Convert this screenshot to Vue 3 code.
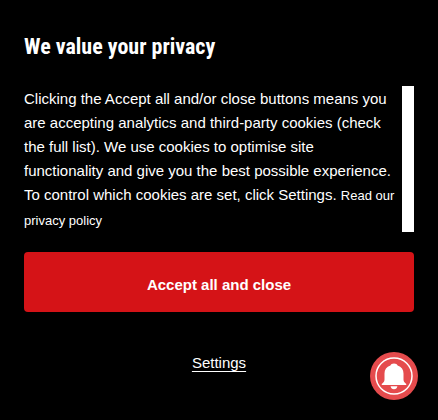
<script setup>
const title = 'We value your privacy'
</script>

<template>
  <main class="consent">
    <h1 class="title">{{ title }}</h1>
    <div class="body">
      <p class="copy">
        Clicking the Accept all and/or close buttons means you<br>
        are accepting analytics and third-party cookies (check<br>
        the full list). We use cookies to optimise site<br>
        functionality and give you the best possible experience.<br>
        To control which cookies are set, click Settings.
        <a class="policy" href="#privacy">Read our<br>privacy policy</a>
      </p>
      <div class="track"></div>
    </div>
    <button class="accept" type="button">Accept all and close</button>
    <a class="settings" href="#settings">Settings</a>
    <button class="bell" type="button" aria-label="Notifications">
      <svg viewBox="0 0 48 48" width="48" height="48" aria-hidden="true">
        <circle cx="24" cy="24" r="24" fill="#e54b4d" />
        <circle cx="24" cy="24" r="18" fill="none" stroke="#fff" stroke-width="1.5" />
        <path fill="#fff" d="M24 11.600c-1.900 0-3.200.8-3.600 2-3.900 1.200-5.900 4.100-5.900 7.800v6.200c0 1.500-.6 2.500-1.700 3.400-.8.600-1.100.9-1.100 1.400s.3.700.8.700h23c.5 0 .8-.2.800-.7s-.3-.8-1.100-1.400c-1.100-.9-1.700-1.900-1.700-3.400v-6.200c0-3.700-2-6.600-5.900-7.800-.4-1.200-1.700-2-3.600-2z" />
        <path fill="#fff" d="M20.600 34.200h6.800c-.3 1.900-1.600 3-3.400 3s-3.100-1.100-3.400-3z" />
      </svg>
    </button>
  </main>
</template>

<style>
body {
  margin: 0;
  background: #000;
}
</style>

<style scoped>
.consent {
  display: flex;
  flex-direction: column;
  box-sizing: border-box;
  min-height: 100vh;
  padding: 32px 24px;
  background: #000;
  color: #fff;
  font-family: "Liberation Sans", sans-serif;
  font-size: 15px;
  line-height: 24px;
}

.title {
  margin: 0 0 24px;
  font-family: "Roboto Condensed", Roboto, "Liberation Sans", sans-serif;
  font-size: 22px;
  font-weight: 700;
  line-height: 30px;
}

.body {
  display: flex;
  justify-content: space-between;
  margin-bottom: 20px;
}

.copy {
  margin: 0 0 -1px;
  padding-top: 1px;
  white-space: nowrap;
}

.policy {
  color: inherit;
  font-size: 13px;
  text-decoration: none;
}

.track {
  flex: 0 0 12px;
  background: #fff;
}

.accept {
  padding: 23px 20px 17px;
  border: 0;
  border-radius: 4px;
  background: #d51317;
  color: #fff;
  font: inherit;
  font-weight: 700;
  line-height: 20px;
  cursor: pointer;
}

.settings {
  align-self: center;
  margin-top: 39px;
  color: inherit;
  text-underline-offset: 3px;
}

.bell {
  position: fixed;
  right: 20px;
  bottom: 20px;
  display: flex;
  padding: 0;
  border: 0;
  border-radius: 50%;
  background: none;
  cursor: pointer;
}
</style>
